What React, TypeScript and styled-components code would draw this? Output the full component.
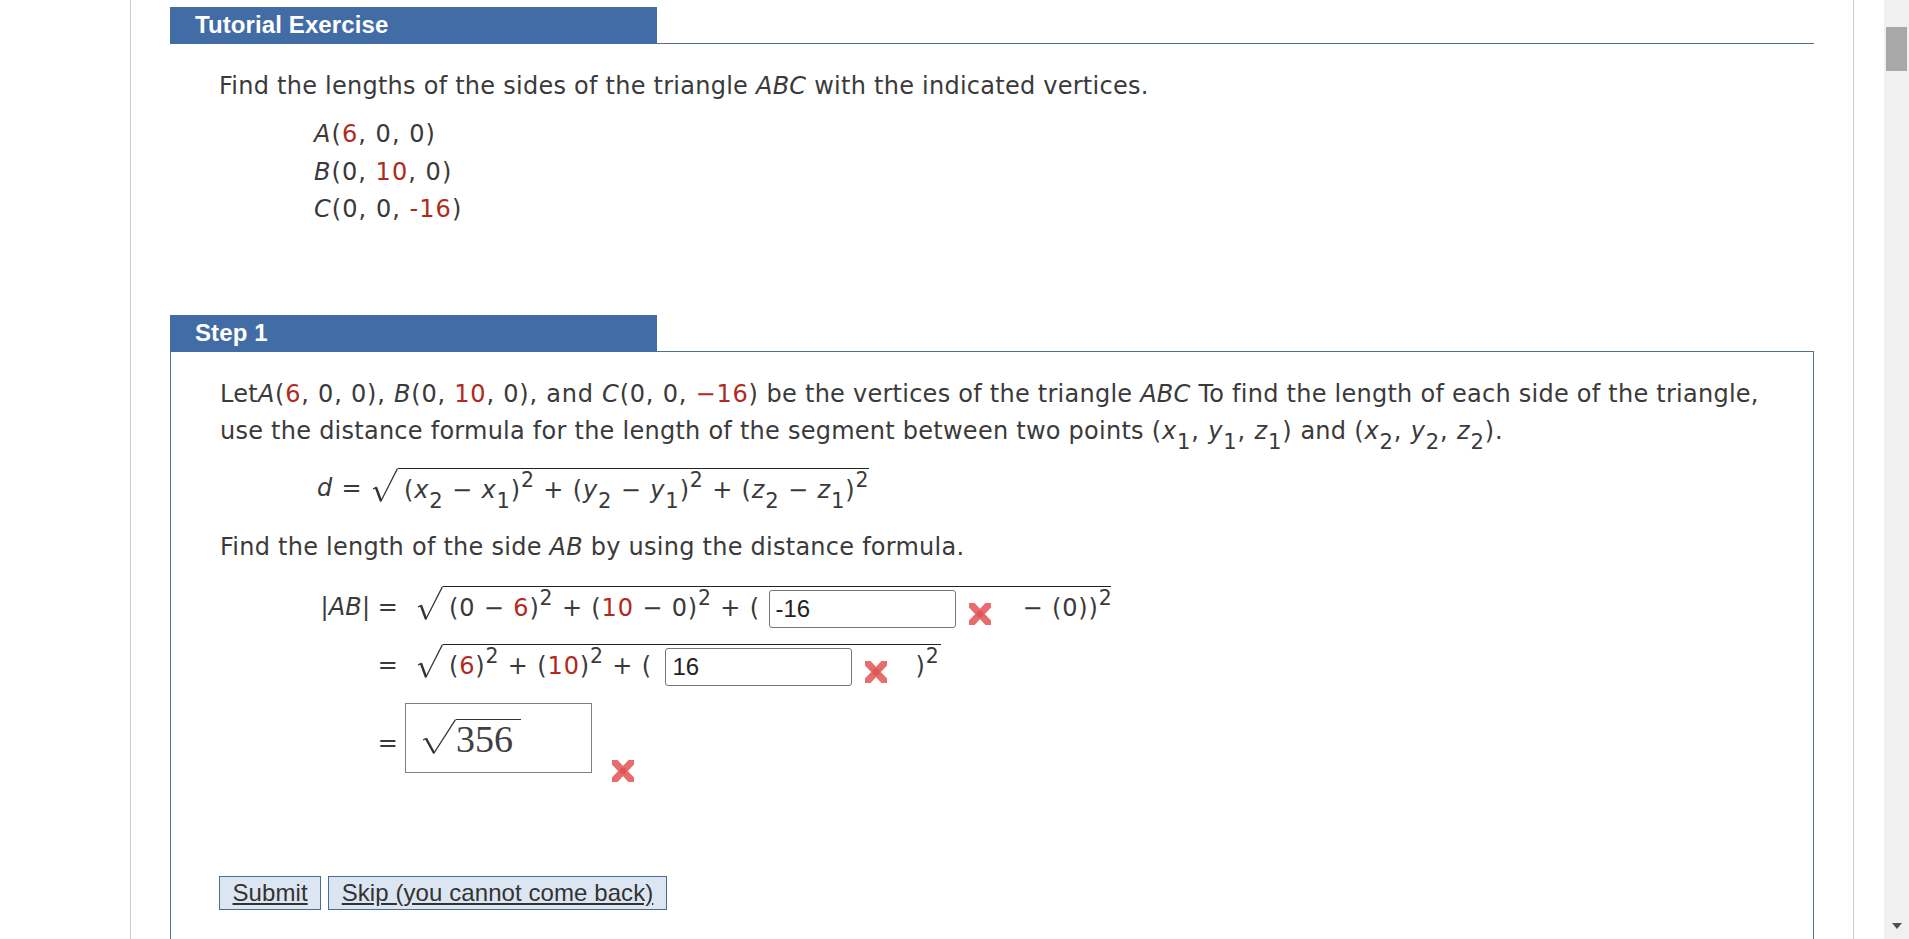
import React from "react";
import styled, { createGlobalStyle } from "styled-components";

const GlobalStyle = createGlobalStyle`
  html, body {
    margin: 0;
    height: 100%;
    overflow: hidden;
    background: #fff;
  }
`;

const Shell = styled.div`
  display: flex;
  height: 100vh;
  color: #3a3a3a;
  font-family: "DejaVu Sans", Verdana, sans-serif;
  font-size: 24px;
  letter-spacing: 0.25px;
  line-height: 37px;
`;

const Viewport = styled.div`
  flex: 1;
  min-width: 0;
  overflow: hidden;
  padding-left: 130px;
`;

const Column = styled.main`
  box-sizing: border-box;
  width: 1724px;
  min-height: 100%;
  padding: 7px 39px 0;
  border-left: 1px solid #ccc;
  border-right: 1px solid #ccc;
`;

const Scrollbar = styled.div`
  flex: 0 0 25px;
  display: flex;
  flex-direction: column;
  align-items: center;
  justify-content: space-between;
  padding: 27px 0 10px;
  box-sizing: border-box;
  background: #f0f0f0;
`;

const Thumb = styled.div`
  width: 21px;
  height: 44px;
  background: #a8a8a8;
`;

const ArrowDown = styled.div`
  width: 0;
  height: 0;
  border-left: 5px solid transparent;
  border-right: 5px solid transparent;
  border-top: 6px solid #505050;
`;

const SectionHead = styled.div`
  box-sizing: border-box;
  height: 37px;
  border-bottom: 1px solid #4f7192;
`;

const Tab = styled.h2`
  box-sizing: border-box;
  width: 487px;
  height: 37px;
  margin: 0;
  padding-left: 25px;
  background: #416ca5;
  color: #fff;
  font-family: "Liberation Sans", Arial, sans-serif;
  font-size: 24px;
  font-weight: 700;
  letter-spacing: 0.1px;
  line-height: 35px;
`;

const Intro = styled.div`
  padding: 24px 0 0 49px;
`;

const Text = styled.p<{ $gap?: number }>`
  margin: ${(p) => p.$gap ?? 0}px 0 0;
  white-space: nowrap;
`;

const Vertices = styled.div`
  margin: 11px 0 0 95px;
  letter-spacing: 1.05px;
  line-height: 37.5px;
`;

const StepSection = styled.section`
  margin-top: 86px;
`;

const Panel = styled.div`
  padding: 24px 0 0 49px;
  border: 1px solid #4f7192;
  border-top: 0;
  min-height: 700px;
`;

const Var = styled.i`
  font-style: italic;
`;

const Given = styled.span`
  color: #b02a20;
`;

const Expr = styled.span<{ $spacing?: number }>`
  letter-spacing: ${(p) => p.$spacing ?? 0.85}px;
`;

const Sub = styled.sub`
  font-size: 0.88em;
  line-height: 0;
  vertical-align: -0.46em;
`;

const Sup = styled.sup`
  font-size: 0.85em;
  line-height: 0;
  vertical-align: 0.52em;
`;

const FormulaRow = styled.div`
  display: flex;
  align-items: flex-start;
  margin: 18px 0 0 97px;
  letter-spacing: 0.85px;
  white-space: nowrap;
`;

const FormulaLabel = styled.span`
  flex: none;
  width: 55px;
  padding-top: 2px;
`;

const RootSign = styled.svg`
  flex: none;
  display: block;
  width: 26px;
  height: 38px;
`;

const Radicand = styled.span<{ $width: number }>`
  box-sizing: border-box;
  display: flex;
  align-items: center;
  width: ${(p) => p.$width}px;
  height: 42px;
  padding: 3px 0 0 6px;
  border-top: 1px solid #222;
  white-space: pre;
`;

const MathRows = styled.div`
  display: flex;
  flex-direction: column;
  gap: 16px;
  margin: 20px 0 0 94px;
  letter-spacing: 0.85px;
`;

const MathRow = styled.div`
  display: flex;
  align-items: flex-start;
  white-space: pre;
`;

const RowLabel = styled.span`
  width: 84px;
  margin-right: 19px;
  padding-top: 3px;
  letter-spacing: 0.1px;
  text-align: right;
`;

const BoxLabel = styled(RowLabel)`
  margin-right: 7px;
  padding-top: 23px;
`;

const AnswerInput = styled.input<{ $offset?: number }>`
  box-sizing: border-box;
  flex: none;
  width: 187px;
  height: 38px;
  margin-left: ${(p) => p.$offset ?? 0}px;
  padding: 0 6px;
  border: 1px solid #767676;
  border-radius: 3px;
  color: #222;
  font-family: "Liberation Sans", Arial, sans-serif;
  font-size: 24px;
`;

const WrongMark = styled.svg`
  flex: none;
  display: block;
  width: 26px;
  height: 26px;
`;

const InlineMark = styled(WrongMark)`
  margin: 10px 30px 0 11px;
`;

const ShortMark = styled(WrongMark)`
  margin: 10px 26px 0 11px;
`;

const BoxMark = styled(WrongMark)`
  margin: 56px 0 0 18px;
`;

const MathBox = styled.div`
  box-sizing: border-box;
  display: flex;
  align-items: flex-start;
  width: 187px;
  height: 70px;
  margin-top: 1px;
  padding: 15px 0 0 16px;
  border: 1px solid #808080;
`;

const BoxRootSign = styled.svg`
  flex: none;
  display: block;
  width: 34px;
  height: 36px;
`;

const BoxRadicand = styled.span`
  padding-right: 8px;
  border-top: 1px solid #333;
  color: #404040;
  font-family: "Liberation Serif", "Times New Roman", serif;
  font-size: 38px;
  letter-spacing: 0;
  line-height: 38px;
`;

const Actions = styled.div`
  display: flex;
  gap: 7px;
  margin: 92px 0 0 -1px;
  padding-bottom: 40px;
`;

const ActionButton = styled.button`
  box-sizing: border-box;
  height: 34px;
  padding: 0 12.5px;
  border: 1px solid #4a6d94;
  background: #dce6f2;
  color: #333;
  font-family: "Liberation Sans", Arial, sans-serif;
  font-size: 24px;
  letter-spacing: 0.08px;
  line-height: 30px;
  text-decoration: underline;
`;

function Root() {
  return (
    <RootSign viewBox="0 0 26 38">
      <path d="M1 21 L4 19.5 L9 33 L25.5 0.5" fill="none" stroke="#333" strokeWidth="1.3" />
      <path d="M4 19.5 L9 33" fill="none" stroke="#333" strokeWidth="2.4" />
    </RootSign>
  );
}

function Wrong({ as: Mark = InlineMark }: { as?: typeof WrongMark }) {
  return (
    <Mark viewBox="0 0 26 26">
      <filter id="soft">
        <feGaussianBlur stdDeviation="0.6" />
      </filter>
      <g filter="url(#soft)">
        <path d="M4.5 4 L21.5 22 M21.5 4 L4.5 22" stroke="#e66c6e" strokeWidth="7" strokeLinecap="round" />
        <circle cx="13" cy="13" r="3.5" fill="#df5558" />
      </g>
    </Mark>
  );
}

export default function App() {
  return (
    <>
      <GlobalStyle />
      <Shell>
        <Viewport>
          <Column>
            <section>
              <SectionHead>
                <Tab>Tutorial Exercise</Tab>
              </SectionHead>
              <Intro>
                <Text>
                  Find the lengths of the sides of the triangle <Var>ABC</Var> with the indicated vertices.
                </Text>
                <Vertices>
                  <Text>
                    <Var>A</Var>(<Given>6</Given>, 0, 0)
                  </Text>
                  <Text>
                    <Var>B</Var>(0, <Given>10</Given>, 0)
                  </Text>
                  <Text>
                    <Var>C</Var>(0, 0, <Given>-16</Given>)
                  </Text>
                </Vertices>
              </Intro>
            </section>

            <StepSection>
              <SectionHead>
                <Tab>Step 1</Tab>
              </SectionHead>
              <Panel>
                <Text>
                  Let
                  <Expr $spacing={0.78}>
                    <Var>A</Var>(<Given>6</Given>, 0, 0), <Var>B</Var>(0, <Given>10</Given>, 0), and <Var>C</Var>(0, 0,{" "}
                    <Given>−16</Given>)
                  </Expr>{" "}
                  be the vertices of the triangle <Var>ABC</Var> To find the length of each side of the triangle,
                  <br />
                  use the distance formula for the length of the segment between two points{" "}
                  <Expr>
                    (<Var>x</Var>
                    <Sub>1</Sub>, <Var>y</Var>
                    <Sub>1</Sub>, <Var>z</Var>
                    <Sub>1</Sub>)
                  </Expr>{" "}
                  and{" "}
                  <Expr>
                    (<Var>x</Var>
                    <Sub>2</Sub>, <Var>y</Var>
                    <Sub>2</Sub>, <Var>z</Var>
                    <Sub>2</Sub>).
                  </Expr>
                </Text>

                <FormulaRow>
                  <FormulaLabel>
                    <Var>d</Var> =
                  </FormulaLabel>
                  <Root />
                  <Radicand $width={471}>
                    <span>
                      (<Var>x</Var>
                      <Sub>2</Sub> − <Var>x</Var>
                      <Sub>1</Sub>)<Sup>2</Sup> + (<Var>y</Var>
                      <Sub>2</Sub> − <Var>y</Var>
                      <Sub>1</Sub>)<Sup>2</Sup> + (<Var>z</Var>
                      <Sub>2</Sub> − <Var>z</Var>
                      <Sub>1</Sub>)<Sup>2</Sup>
                    </span>
                  </Radicand>
                </FormulaRow>

                <Text $gap={19}>
                  Find the length of the side <Var>AB</Var> by using the distance formula.
                </Text>

                <MathRows>
                  <MathRow>
                    <RowLabel>
                      |<Var>AB</Var>| =
                    </RowLabel>
                    <Root />
                    <Radicand $width={668}>
                      <span>
                        (0 − <Given>6</Given>)<Sup>2</Sup> + (<Given>10</Given> − 0)<Sup>2</Sup> + ({" "}
                      </span>
                      <AnswerInput defaultValue="-16" />
                      <Wrong />
                      <span>
                        − (0))<Sup>2</Sup>
                      </span>
                    </Radicand>
                  </MathRow>
                  <MathRow>
                    <RowLabel>=</RowLabel>
                    <Root />
                    <Radicand $width={498}>
                      <span>
                        (<Given>6</Given>)<Sup>2</Sup> + (<Given>10</Given>)<Sup>2</Sup> + ({" "}
                      </span>
                      <AnswerInput $offset={5} defaultValue="16" />
                      <Wrong as={ShortMark} />
                      <span>
                        )<Sup>2</Sup>
                      </span>
                    </Radicand>
                  </MathRow>
                  <MathRow>
                    <BoxLabel>=</BoxLabel>
                    <MathBox>
                      <BoxRootSign viewBox="0 0 34 36">
                        <path d="M1 21 L4 19.5 L12 34 L33.5 0.5" fill="none" stroke="#333" strokeWidth="1.3" />
                        <path d="M4 19.5 L12 34" fill="none" stroke="#333" strokeWidth="2.4" />
                      </BoxRootSign>
                      <BoxRadicand>356</BoxRadicand>
                    </MathBox>
                    <Wrong as={BoxMark} />
                  </MathRow>
                </MathRows>

                <Actions>
                  <ActionButton>Submit</ActionButton>
                  <ActionButton>Skip (you cannot come back)</ActionButton>
                </Actions>
              </Panel>
            </StepSection>
          </Column>
        </Viewport>
        <Scrollbar>
          <Thumb />
          <ArrowDown />
        </Scrollbar>
      </Shell>
    </>
  );
}
